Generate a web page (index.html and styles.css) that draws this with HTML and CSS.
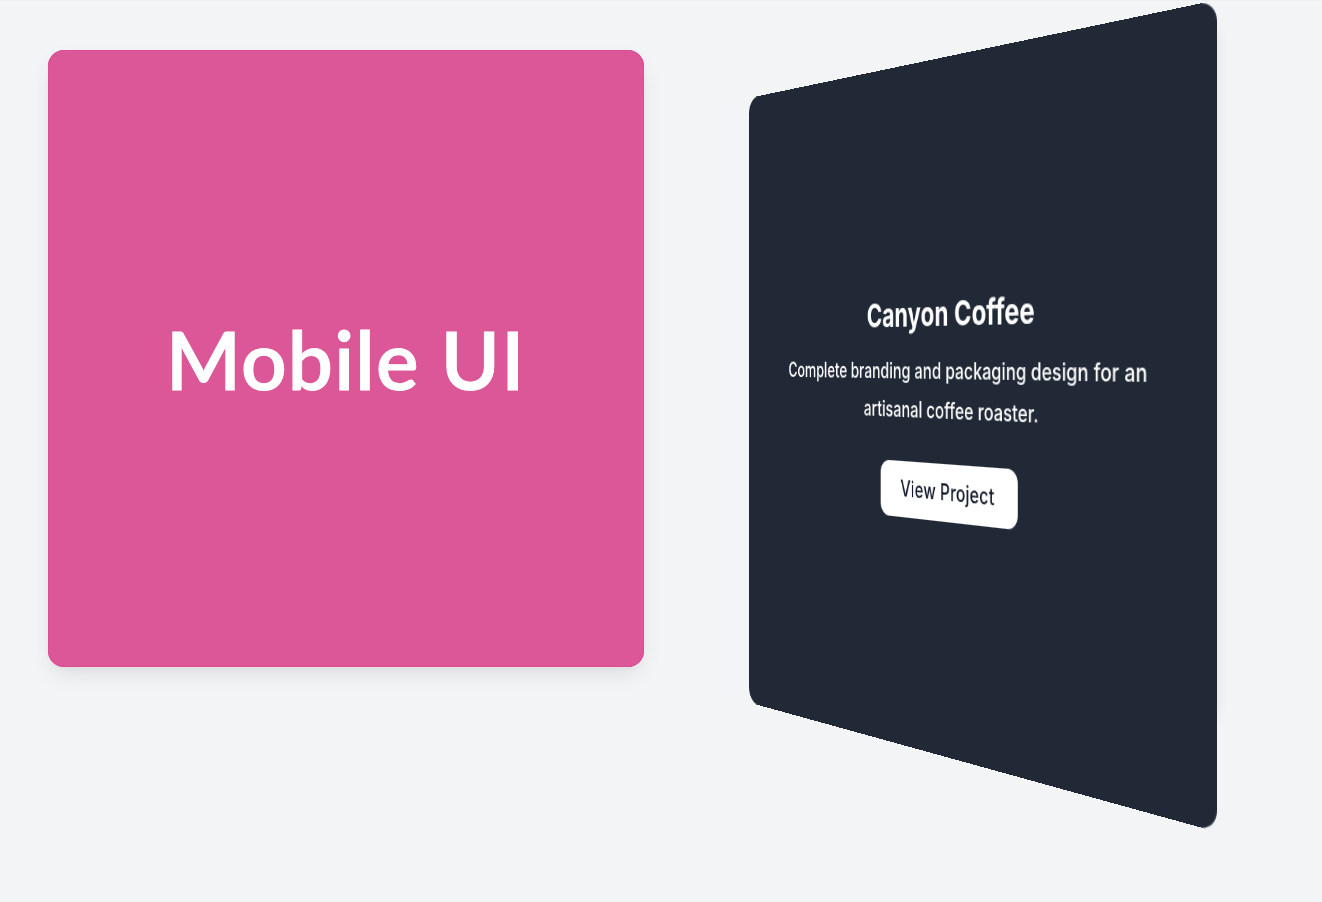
FILE: index.html
```html
<!DOCTYPE html>
<html lang="en">
<head>
<meta charset="utf-8">
<title>Portfolio cards</title>
<link rel="stylesheet" href="styles.css">
</head>
<body>
<main class="grid">
  <article class="card card-front">
    <h2 class="front-title">Mobile UI</h2>
  </article>
  <div class="slot">
    <article class="card card-back">
      <h3 class="back-title">Canyon Coffee</h3>
      <p class="back-text">Complete branding and packaging design for an artisanal coffee roaster.</p>
      <a class="back-button" href="#">View Project</a>
    </article>
  </div>
</main>
</body>
</html>
```
FILE: styles.css
```css
* { box-sizing: border-box; }
html, body { margin: 0; height: 100%; overflow: hidden; }
body { background: #f3f4f6; border-top: 1px solid #eceef0; }
.grid {
  display: grid;
  grid-template-columns: 595.5px 597px;
  column-gap: 32.5px;
  padding: 49px 48px 0;
}
.card {
  height: 617px;
  border-radius: 16px;
  display: flex;
  flex-direction: column;
  align-items: center;
  justify-content: center;
}
.card-front {
  background: #db5797;
  box-shadow: inset 0 0 0 1px #de4c95, 0 10px 25px -5px rgba(0,0,0,.1), 0 4px 10px -4px rgba(0,0,0,.05);
}
.front-title {
  margin: 0;
  color: #fff;
  font: 600 80px/1.2 Lato, sans-serif;
  letter-spacing: 1.25px;
  -webkit-text-stroke: 1px #fff;
}
.slot { position: relative; height: 617px; }
.slot::before {
  content: "";
  position: absolute;
  left: 504px;
  right: 56px;
  top: -20px;
  bottom: -48px;
  box-shadow: 0 0 14px rgba(0,0,0,.08);
}
.card-back {
  background: #212936;
  padding: 40px 40px 43px;
  color: #fff;
  text-align: center;
  font-family: Inter, sans-serif;
  transform-origin: 0 0;
  transform: matrix3d(.53613,-.14126,0,-.000458, 0,.97974,0,0, 0,0,1,0, 73,48,0,1);
}
.back-title { margin: 0 0 12px; font-size: 30px; line-height: 44px; font-weight: 700; letter-spacing: .08px; }
.back-text { margin: 0 0 30px; font-size: 20px; line-height: 34.5px; letter-spacing: .07px; font-weight: 500; }
.back-button {
  display: inline-block;
  padding: 11px 28px;
  border-radius: 12px;
  background: #fff;
  color: #111827;
  font-size: 20px;
  line-height: 29px;
  font-weight: 500;
  letter-spacing: .25px;
  text-decoration: none;
}
```
